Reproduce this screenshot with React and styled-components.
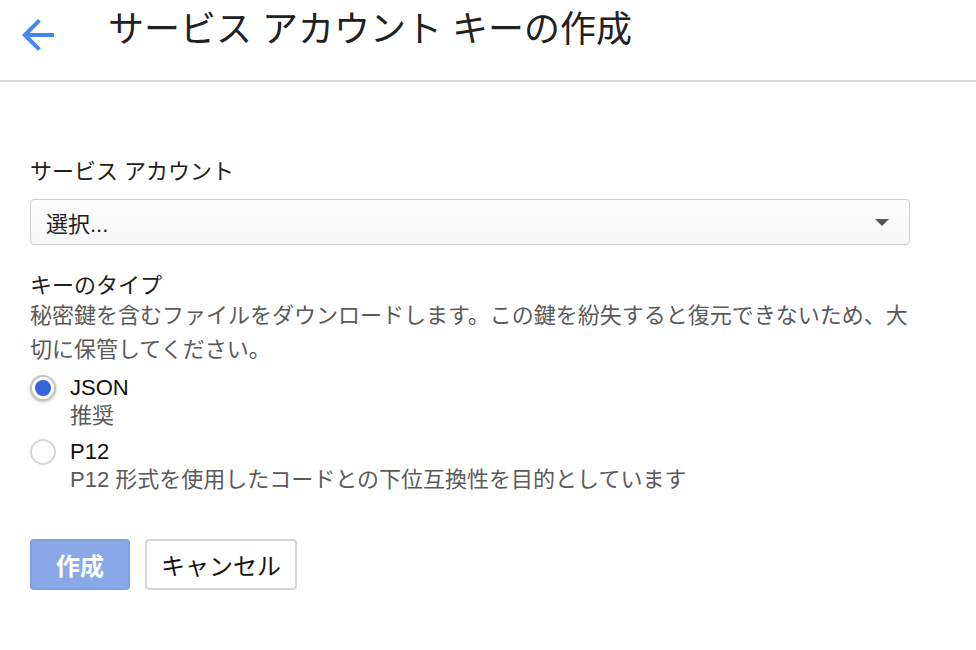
import styled, { createGlobalStyle } from "styled-components";

const GlobalStyle = createGlobalStyle`
  body {
    margin: 0;
    background: #fff;
    font-family: "Liberation Sans", "Noto Sans CJK JP", sans-serif;
    color: #212121;
  }
`;

const Header = styled.header`
  height: 80px;
  border-bottom: 2px solid #dadada;
  display: flex;
  align-items: flex-start;
`;

const BackButton = styled.button`
  border: none;
  background: none;
  padding: 0;
  margin: 11px 0 0 14px;
  width: 48px;
  height: 48px;
  cursor: pointer;
  display: flex;
`;

const Title = styled.h1`
  margin: 0 0 0 46px;
  font-size: 36px;
  font-weight: 400;
  line-height: 60px;
  color: #212121;
`;

const Main = styled.main`
  width: 880px;
  padding: 75px 0 0 30px;
`;

const FieldLabel = styled.div`
  font-size: 22px;
  line-height: ${(p) => p.$lh || 30}px;
  margin-bottom: ${(p) => p.$mb || 0}px;
`;

const Select = styled.div`
  height: 44px;
  border: 1px solid #d0d0d0;
  border-radius: 4px;
  background: linear-gradient(#fdfdfd, #f7f7f7);
  display: flex;
  align-items: center;
  justify-content: space-between;
  padding: 0 20px 0 15px;
  font-size: 22px;
`;

const Caret = styled.span`
  width: 0;
  height: 0;
  border-left: 7px solid transparent;
  border-right: 7px solid transparent;
  border-top: 7px solid #555;
`;

const Section = styled.section`
  margin-top: 28px;
`;

const Help = styled.div`
  font-size: 22px;
  line-height: 34px;
  color: #5a5a5a;
`;

const Options = styled.div`
  margin-top: 7px;
  display: flex;
  flex-direction: column;
  gap: 8px;
`;

const Option = styled.label`
  display: grid;
  grid-template-columns: 26px 1fr;
  column-gap: 14px;
  align-items: center;
`;

const Radio = styled.span`
  width: 26px;
  height: 26px;
  box-sizing: border-box;
  border-radius: 50%;
  border: 2px solid ${(p) => (p.$checked ? "#c4c4c4" : "#d6d6d6")};
  background: #fff;
  box-shadow: ${(p) => (p.$checked ? "0 1px 3px rgba(0,0,0,0.25)" : "none")};
  display: flex;
  align-items: center;
  justify-content: center;
  &::after {
    content: "";
    width: 16px;
    height: 16px;
    border-radius: 50%;
    background: ${(p) => (p.$checked ? "#3367d6" : "transparent")};
  }
`;

const OptionName = styled.span`
  font-size: 22px;
  line-height: 28px;
  color: #111;
`;

const OptionHelp = styled.span`
  grid-column: 2;
  font-size: 22px;
  line-height: 28px;
  color: #5a5a5a;
`;

const Actions = styled.div`
  margin-top: 45px;
  display: flex;
  gap: 15px;
`;

const Button = styled.button`
  min-width: 100px;
  height: 51px;
  padding: 0 14px;
  border-radius: 4px;
  font-family: inherit;
  font-size: 24px;
  font-weight: ${(p) => (p.$primary ? 700 : 400)};
  color: ${(p) => (p.$primary ? "#fff" : "#111")};
  background: ${(p) => (p.$primary ? "#88a8e7" : "#fff")};
  border: 2px solid ${(p) => (p.$primary ? "#7fa0e2" : "#d6d6d6")};
  cursor: pointer;
`;

export default function App() {
  return (
    <>
      <GlobalStyle />
      <Header>
        <BackButton aria-label="戻る">
          <svg width="48" height="48" viewBox="0 0 24 24">
            <path
              fill="#4285f4"
              d="M20 11H7.83l5.59-5.59L12 4l-8 8 8 8 1.41-1.41L7.83 13H20v-2z"
            />
          </svg>
        </BackButton>
        <Title>サービス アカウント キーの作成</Title>
      </Header>
      <Main>
        <FieldLabel $mb={12}>サービス アカウント</FieldLabel>
        <Select>
          <span>選択...</span>
          <Caret />
        </Select>
        <Section>
          <FieldLabel $lh={26}>キーのタイプ</FieldLabel>
          <Help>
            秘密鍵を含むファイルをダウンロードします。この鍵を紛失すると復元できないため、大切に保管してください。
          </Help>
          <Options>
            <Option>
              <Radio $checked />
              <OptionName>JSON</OptionName>
              <OptionHelp>推奨</OptionHelp>
            </Option>
            <Option>
              <Radio />
              <OptionName>P12</OptionName>
              <OptionHelp>P12 形式を使用したコードとの下位互換性を目的としています</OptionHelp>
            </Option>
          </Options>
        </Section>
        <Actions>
          <Button $primary>作成</Button>
          <Button>キャンセル</Button>
        </Actions>
      </Main>
    </>
  );
}
